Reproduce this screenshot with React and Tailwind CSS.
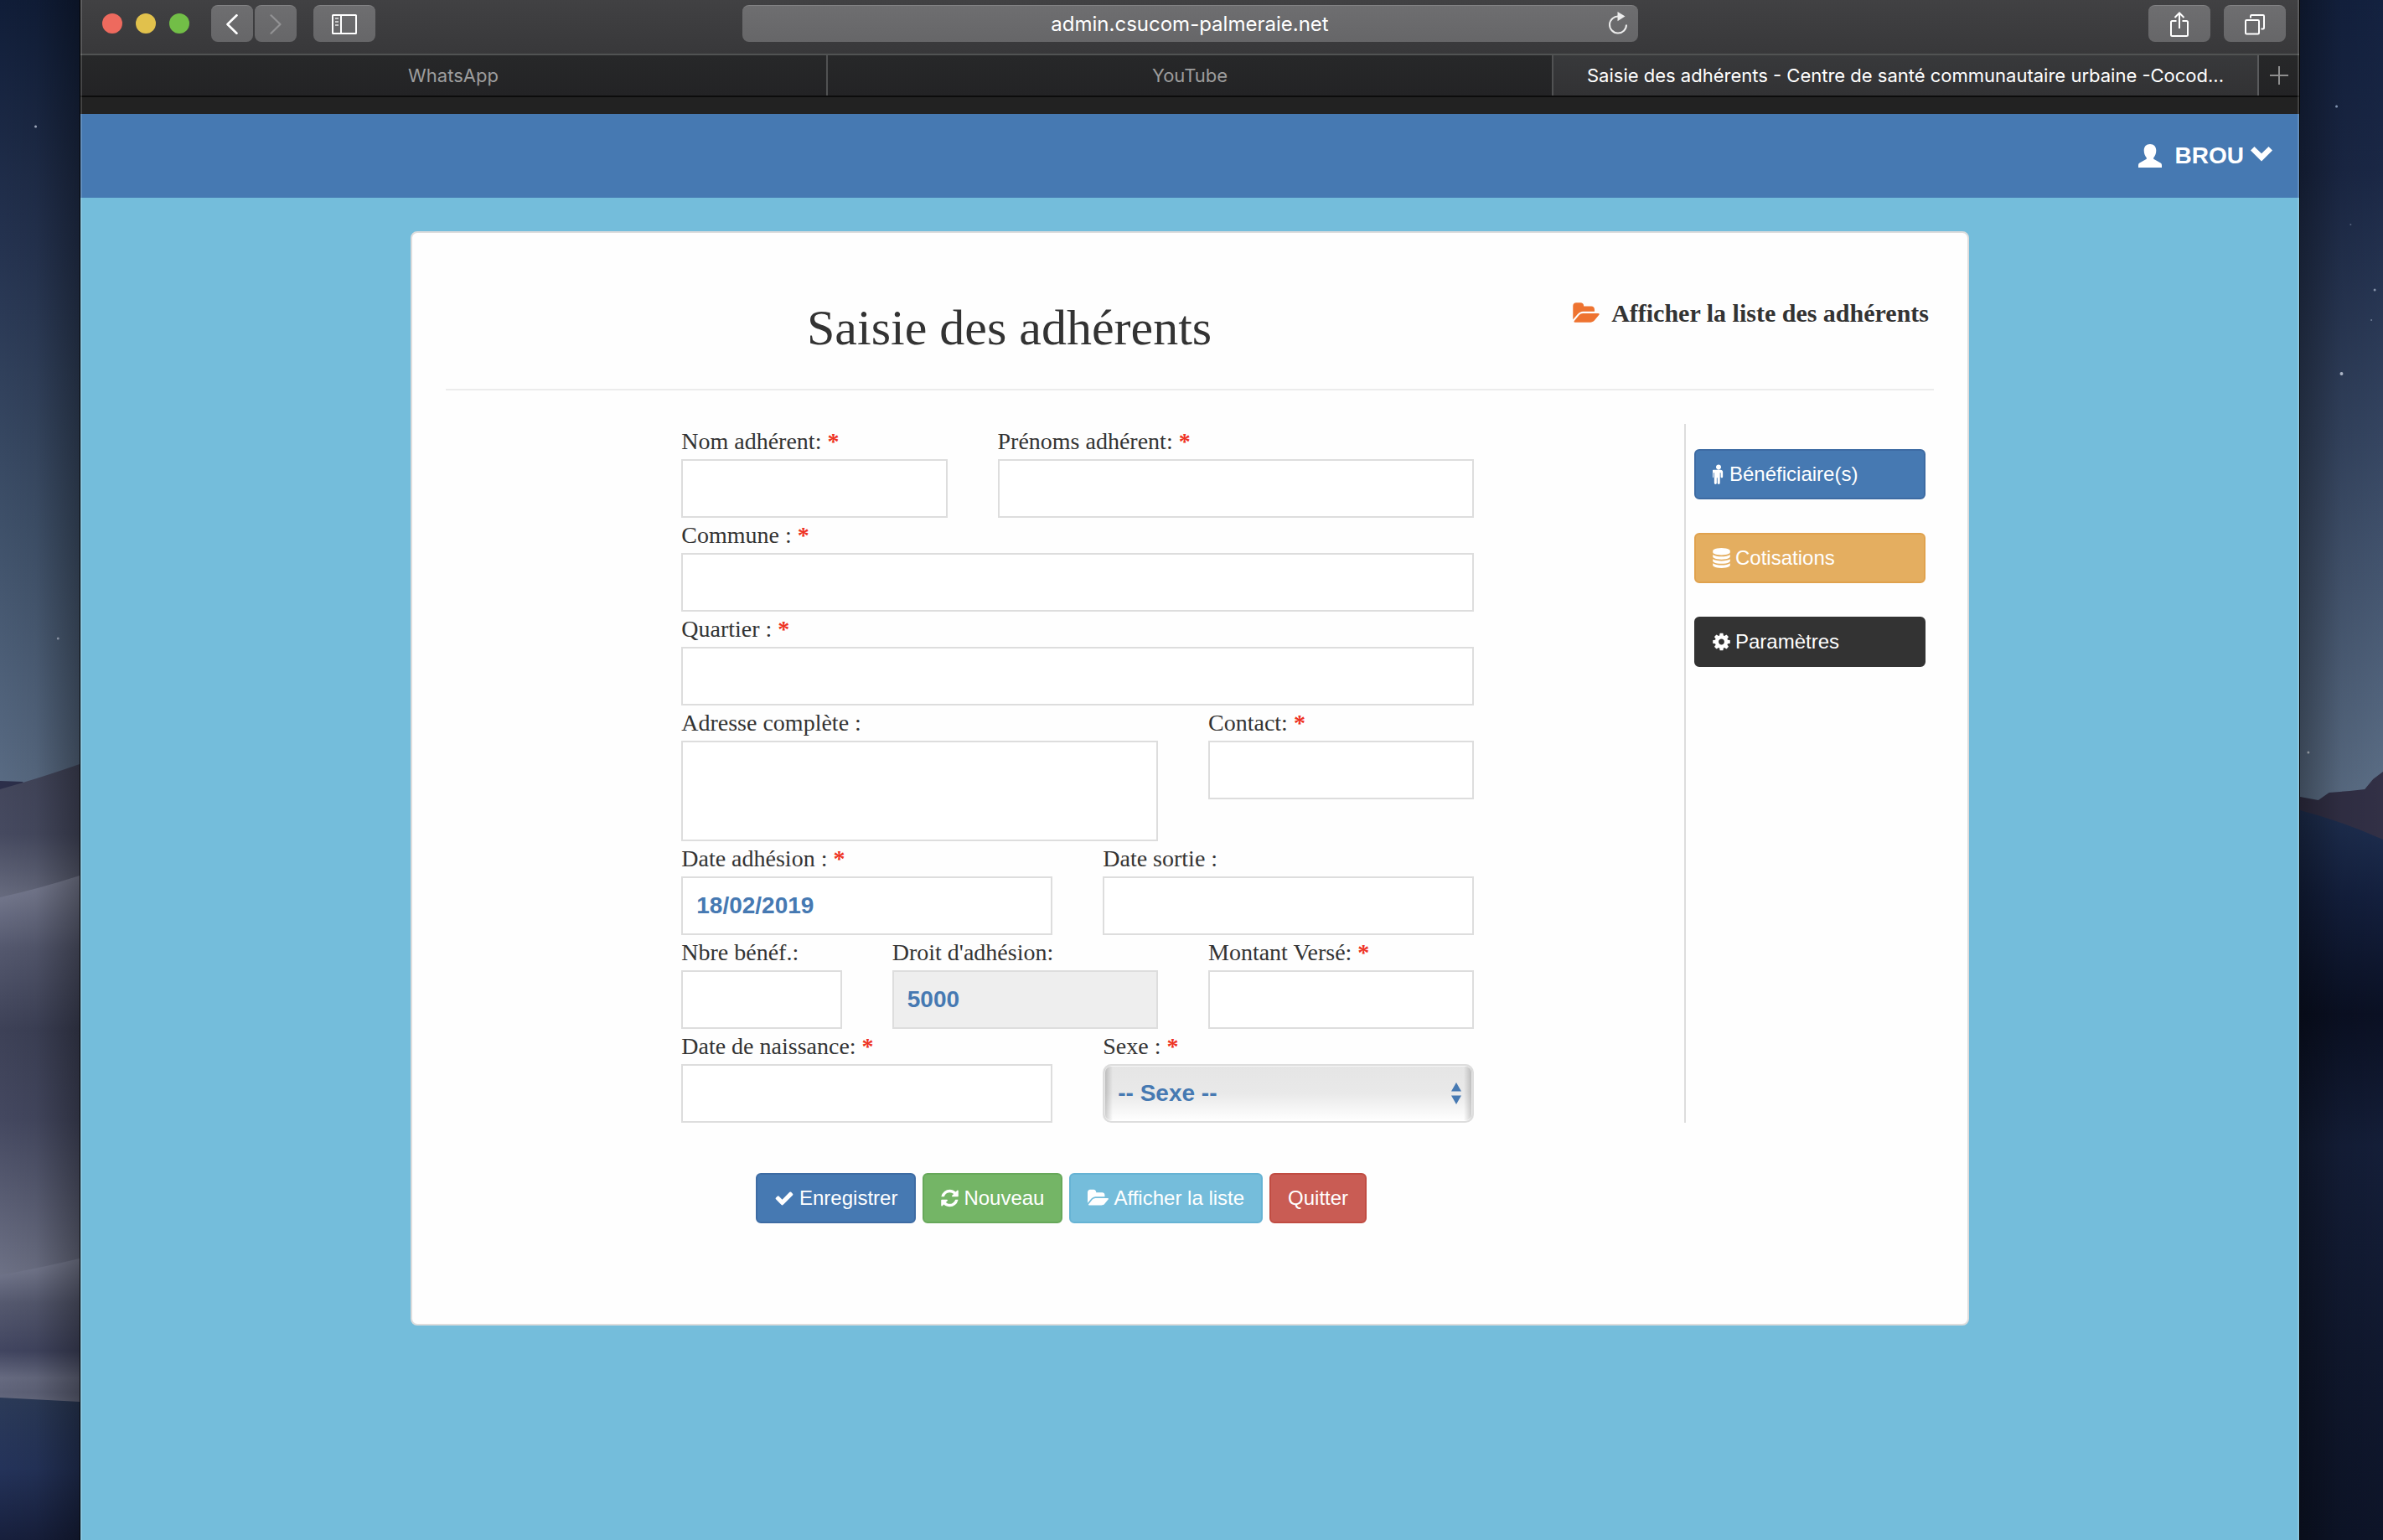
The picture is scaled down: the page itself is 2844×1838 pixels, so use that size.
import React from "react";

const SANS = "font-['Liberation_Sans',Arial,sans-serif]";
const SERIF = "font-['Liberation_Serif','Times_New_Roman',serif]";

const ICONS = {
  check: {
    box: "0 0 1792 1792",
    size: "w-6 h-6",
    d: "M1671 566q0 40-28 68l-724 724-136 136q-28 28-68 28t-68-28l-136-136-362-362q-28-28-28-68t28-68l136-136q28-28 68-28t68 28l294 295 656-657q28-28 68-28t68 28l136 136q28 28 28 68z",
  },
  refresh: {
    box: "128 0 1536 1792",
    size: "w-[21px] h-6",
    d: "M1639 1056q0 5-1 7-64 268-268 434.5t-478 166.5q-146 0-282.5-55t-243.5-157l-129 129q-19 19-45 19t-45-19-19-45v-448q0-26 19-45t45-19h448q26 0 45 19t19 45-19 45l-137 137q71 66 161 102t187 36q134 0 250-65t186-179q11-17 53-117 8-23 30-23h192q13 0 22.5 9.5t9.5 22.5zm25-800v448q0 26-19 45t-45 19h-448q-26 0-45-19t-19-45 19-45l138-138q-148-137-349-137-134 0-250 65t-186 179q-11 17-53 117-8 23-30 23h-199q-13 0-22.5-9.5t-9.5-22.5v-7q65-268 270-434.5t480-166.5q146 0 284 55.5t245 156.5l130-129q19-19 45-19t45 19 19 45z",
  },
  folder: {
    box: "64 0 1879 1792",
    size: "w-[25px] h-6",
    d: "M1943 952q0 31-31 66l-336 396q-43 51-120.5 86.5t-143.5 35.5h-1088q-34 0-60.5-13t-26.5-43q0-31 31-66l336-396q43-51 120.5-86.5t143.5-35.5h1088q34 0 60.5 13t26.5 43zm-343-344v160h-832q-94 0-197 47.5t-164 119.5l-337 396-5 6q0-4-.5-12.5t-.5-12.5v-960q0-92 66-158t158-66h320q92 0 158 66t66 158v32h544q92 0 158 66t66 158z",
  },
  database: {
    box: "128 0 1536 1792",
    size: "w-[21px] h-6",
    d: "M896 768q237 0 443-43t325-127v170q0 69-103 128t-280 93.5-385 34.5-385-34.5-280-93.5-103-128v-170q119 84 325 127t443 43zm0 768q237 0 443-43t325-127v170q0 69-103 128t-280 93.5-385 34.5-385-34.5-280-93.5-103-128v-170q119 84 325 127t443 43zm0-384q237 0 443-43t325-127v170q0 69-103 128t-280 93.5-385 34.5-385-34.5-280-93.5-103-128v-170q119 84 325 127t443 43zm0-1152q208 0 385 34.5t280 93.5 103 128v128q0 69-103 128t-280 93.5-385 34.5-385-34.5-280-93.5-103-128v-128q0-69 103-128t280-93.5 385-34.5z",
  },
  cog: {
    box: "128 0 1536 1792",
    size: "w-[21px] h-6",
    d: "M1152 896q0-106-75-181t-181-75-181 75-75 181 75 181 181 75 181-75 75-181zm512-109v222q0 12-8 23t-20 13l-185 28q-19 54-39 91 35 50 107 138 10 12 10 25t-9 23q-27 37-99 108t-94 71q-12 0-26-9l-138-108q-44 23-91 38-16 136-29 186-7 28-36 28h-222q-14 0-24.5-8.5t-11.5-21.5l-28-184q-49-16-90-37l-141 107q-10 9-25 9-14 0-25-11-126-114-165-168-7-10-7-23 0-12 8-23 15-21 51-66.5t54-70.5q-27-50-41-99l-183-27q-13-2-21-12.5t-8-23.5v-222q0-12 8-23t19-13l186-28q14-46 39-92-40-57-107-138-10-12-10-24 0-10 9-23 26-36 98.5-107.5t94.5-71.5q13 0 26 10l138 107q44-23 91-38 16-136 29-186 7-28 36-28h222q14 0 24.5 8.5t11.5 21.5l28 184q49 16 90 37l142-107q9-9 24-9 13 0 25 10 129 119 165 170 7 8 7 22 0 12-8 23-15 21-51 66.5t-54 70.5q26 50 41 98l183 28q13 2 21 12.5t8 23.5z",
  },
  male: {
    box: "384 0 1024 1792",
    size: "w-[14px] h-6",
    d: "M1280 704v416q0 40-28 68t-68 28-68-28-28-68v-352h-64v912q0 46-33 79t-79 33-79-33-33-79v-464h-64v464q0 46-33 79t-79 33-79-33-33-79v-912h-64v352q0 40-28 68t-68 28-68-28-28-68v-416q0-80 56-136t136-56h640q80 0 136 56t56 136zm-160-448q0 93-65.5 158.5t-158.5 65.5-158.5-65.5-65.5-158.5 65.5-158.5 158.5-65.5 158.5 65.5 65.5 158.5z",
  },
};

function Icon({ name, className }) {
  const icon = ICONS[name];
  return (
    <svg viewBox={icon.box} className={`shrink-0 ${className || icon.size}`} fill="currentColor" aria-hidden="true">
      <path d={icon.d} />
    </svg>
  );
}

function LeftWallpaper() {
  return (
    <svg viewBox="0 0 96 1838" preserveAspectRatio="none" className="w-24 shrink-0 border-r border-black" aria-hidden="true">
      <defs>
        <linearGradient id="l-sky" x1="0" y1="0" x2="0" y2="1">
          <stop offset="0" stopColor="#101d38" />
          <stop offset="0.3" stopColor="#24324f" />
          <stop offset="0.65" stopColor="#3e5069" />
          <stop offset="1" stopColor="#5b6d85" />
        </linearGradient>
        <linearGradient id="l-d1" x1="0" y1="0" x2="0" y2="1">
          <stop offset="0" stopColor="#42455a" />
          <stop offset="0.5" stopColor="#464a60" />
          <stop offset="1" stopColor="#6b6f82" />
        </linearGradient>
        <linearGradient id="l-d2" x1="0" y1="0" x2="0" y2="1">
          <stop offset="0" stopColor="#7d8196" />
          <stop offset="0.18" stopColor="#54586e" />
          <stop offset="0.38" stopColor="#3d4157" />
          <stop offset="0.6" stopColor="#444860" />
          <stop offset="1" stopColor="#6f7387" />
        </linearGradient>
        <linearGradient id="l-d3" x1="0" y1="0" x2="0" y2="1">
          <stop offset="0" stopColor="#7d8196" />
          <stop offset="0.3" stopColor="#55596f" />
          <stop offset="0.62" stopColor="#414560" />
          <stop offset="0.8" stopColor="#666a80" />
          <stop offset="0.9" stopColor="#5f6379" />
          <stop offset="1" stopColor="#6b6f84" />
        </linearGradient>
        <linearGradient id="l-gr" x1="0" y1="0" x2="0" y2="1">
          <stop offset="0" stopColor="#2b3a58" />
          <stop offset="0.5" stopColor="#24335a" />
          <stop offset="1" stopColor="#171f3c" />
        </linearGradient>
        <linearGradient id="l-sh" x1="0" y1="0" x2="1" y2="0">
          <stop offset="0" stopColor="#000" stopOpacity="0" />
          <stop offset="0.45" stopColor="#000" stopOpacity="0.06" />
          <stop offset="1" stopColor="#000" stopOpacity="0.34" />
        </linearGradient>
      </defs>
      <rect width="96" height="960" fill="url(#l-sky)" />
      <circle cx="43" cy="151" r="1.5" fill="#aab4c8" />
      <circle cx="70" cy="762" r="1.5" fill="#aab4c8" />
      <path d="M0 932 L27 933 L60 960 H0z" fill="#2c2f4a" />
      <path d="M0 942 Q50 928 96 912 V1080 H0z" fill="url(#l-d1)" />
      <path d="M0 1071 Q50 1060 96 1045 V1530 H0z" fill="url(#l-d2)" />
      <path d="M0 1522 Q50 1513 96 1502 V1680 H0z" fill="url(#l-d3)" />
      <path d="M0 1668 L96 1673 V1838 H0z" fill="url(#l-gr)" />
      <rect width="96" height="1838" fill="url(#l-sh)" />
    </svg>
  );
}

function RightWallpaper() {
  return (
    <svg viewBox="0 0 100 1838" preserveAspectRatio="none" className="w-[100px] shrink-0 border-l border-black" aria-hidden="true">
      <defs>
        <linearGradient id="r-sky" x1="0" y1="0" x2="0" y2="1">
          <stop offset="0" stopColor="#13213f" />
          <stop offset="0.2" stopColor="#1a2745" />
          <stop offset="0.5" stopColor="#33435f" />
          <stop offset="1" stopColor="#61748b" />
        </linearGradient>
        <linearGradient id="r-d" x1="0" y1="0" x2="0" y2="1">
          <stop offset="0" stopColor="#1f3052" />
          <stop offset="0.12" stopColor="#131f3d" />
          <stop offset="0.28" stopColor="#0a1023" />
          <stop offset="0.46" stopColor="#141e38" />
          <stop offset="0.75" stopColor="#10182e" />
          <stop offset="1" stopColor="#0d1428" />
        </linearGradient>
        <linearGradient id="r-sh" x1="0" y1="0" x2="1" y2="0">
          <stop offset="0" stopColor="#000" stopOpacity="0.34" />
          <stop offset="0.5" stopColor="#000" stopOpacity="0.07" />
          <stop offset="1" stopColor="#000" stopOpacity="0" />
        </linearGradient>
      </defs>
      <rect width="100" height="1010" fill="url(#r-sky)" />
      <circle cx="44" cy="127" r="1.5" fill="#8fa3c4" />
      <circle cx="50" cy="446" r="2" fill="#b9c3d4" />
      <circle cx="90" cy="346" r="1.5" fill="#8895ad" />
      <circle cx="86" cy="382" r="1" fill="#76849e" />
      <circle cx="61" cy="268" r="1" fill="#5d6b86" />
      <circle cx="10" cy="898" r="1.5" fill="#c4ccd6" />
      <path d="M0 951 L22 955 L35 946 L60 944 L78 942 L88 930 L100 921 V1010 H0z" fill="#323046" />
      <path d="M0 967 Q50 980 100 1002 V1838 H0z" fill="url(#r-d)" />
      <rect width="100" height="1838" fill="url(#r-sh)" />
    </svg>
  );
}

function ToolButton({ label, className, children }) {
  return (
    <button
      type="button"
      aria-label={label}
      className={`flex h-11 items-center justify-center rounded-lg border-t border-[#828284] bg-linear-to-b from-[#6e6e70] to-[#666668] text-white ${className}`}
    >
      {children}
    </button>
  );
}

function Toolbar() {
  return (
    <div className="grid h-[66px] grid-cols-[1fr_minmax(0,1069px)_1fr] items-start border-b-2 border-[#515353] bg-linear-to-b from-[#414143] to-[#38383a] pt-1.5">
      <div className="flex items-center pl-[26px]">
        <div className="flex gap-4">
          <span className="size-6 rounded-full bg-[#ee6a5e]" />
          <span className="size-6 rounded-full bg-[#e1c14c]" />
          <span className="size-6 rounded-full bg-[#72be47]" />
        </div>
        <div className="ml-[26px] flex gap-0.5">
          <ToolButton label="Page précédente" className="w-[50px]">
            <svg viewBox="0 0 14 24" className="h-6 w-3.5" fill="none" stroke="currentColor" strokeWidth="2.6" strokeLinecap="round" strokeLinejoin="round">
              <path d="M12.5 1.3 L1.5 12 L12.5 22.7" />
            </svg>
          </ToolButton>
          <ToolButton label="Page suivante" className="w-[50px]">
            <svg viewBox="0 0 14 24" className="h-6 w-3.5 text-[#929294]" fill="none" stroke="currentColor" strokeWidth="2.2" strokeLinecap="round" strokeLinejoin="round">
              <path d="M1.5 1.3 L12.5 12 L1.5 22.7" />
            </svg>
          </ToolButton>
        </div>
        <ToolButton label="Barre latérale" className="ml-5 w-[74px]">
          <svg viewBox="0 0 30 24" className="h-6 w-[30px]" fill="none" stroke="currentColor" strokeWidth="2">
            <rect x="1" y="1" width="28" height="22" rx="0.6" />
            <path d="M11 1 V23" />
            <path d="M4 5 H8 M4 9 H8 M4 13 H8" stroke="#c8c8c9" />
          </svg>
        </ToolButton>
      </div>
      <div className="relative">
        <input
          type="text"
          aria-label="Adresse"
          defaultValue="admin.csucom-palmeraie.net"
          className="h-11 w-full rounded-lg border-t border-[#828284] bg-linear-to-b from-[#6e6e70] to-[#666668] text-center font-['Inter',sans-serif] text-2xl text-white"
        />
        <button type="button" aria-label="Recharger" className="absolute top-2 right-3 text-[#ececec]">
          <svg viewBox="0 0 24 28" className="h-7 w-6" fill="none" stroke="currentColor" strokeWidth="2">
            <path d="M13 5.6 A10 10 0 1 0 22 15.5" />
            <path d="M11.5 0 L20.5 5.6 L11.5 11.2z" fill="currentColor" stroke="none" />
          </svg>
        </button>
      </div>
      <div className="flex justify-end gap-4 pr-4">
        <ToolButton label="Partager" className="w-[74px]">
          <svg viewBox="0 0 24 30" className="h-[30px] w-6" fill="none" stroke="currentColor" strokeWidth="2">
            <path d="M8.5 11 H3.5 Q2 11 2 12.5 V27.5 Q2 29 3.5 29 H20.5 Q22 29 22 27.5 V12.5 Q22 11 20.5 11 H15.5" />
            <path d="M12 20 V1.5 M6.5 7 L12 1.5 L17.5 7" />
          </svg>
        </ToolButton>
        <ToolButton label="Afficher les onglets" className="w-[74px]">
          <svg viewBox="0 0 26 26" className="size-[26px]" fill="none" stroke="currentColor" strokeWidth="2">
            <rect x="2" y="8" width="16" height="16.5" rx="1.2" />
            <path d="M8 5.5 V3.2 Q8 2 9.2 2 H22.8 Q24 2 24 3.2 V17.3 Q24 18.5 22.8 18.5 H20.5" />
          </svg>
        </ToolButton>
      </div>
    </div>
  );
}

function TabBar() {
  return (
    <div className="border-b-2 border-[#0c0c0c] font-['Inter',sans-serif] text-[22px]">
      <nav className="grid h-12 grid-cols-[892fr_866fr_842fr_48px] bg-linear-to-b from-[#272829] to-[#232325] text-[#9d9d9d]">
        <button type="button" className="truncate border-r-2 border-[#515253] px-6">WhatsApp</button>
        <button type="button" className="truncate border-r-2 border-[#515253] px-6">YouTube</button>
        <button type="button" className="truncate border-r-2 border-[#5a5b5d] bg-linear-to-b from-[#38393b] to-[#323234] px-6 text-white">
          Saisie des adhérents - Centre de santé communautaire urbaine -Cocod...
        </button>
        <button type="button" aria-label="Nouvel onglet" className="flex items-center justify-center">
          <svg viewBox="0 0 22 22" className="size-[22px]" stroke="#8e8e8e" strokeWidth="2">
            <path d="M11 0 V22 M0 11 H22" />
          </svg>
        </button>
      </nav>
    </div>
  );
}

function SiteNav() {
  return (
    <header className="flex h-[100px] items-center justify-end bg-[#4679b2] pr-8">
      <button type="button" className={`flex items-center text-[28px] font-bold text-white ${SANS}`}>
        <svg viewBox="0 0 28 28" className="mr-4 size-7" fill="currentColor" aria-hidden="true">
          <path d="M14 0C18.6 0 21.3 3 21.3 7.6C21.3 11.4 20 14.4 18.2 16.2V17.8L26.6 22.6Q28 23.5 28 25V28H0V25Q0 23.5 1.4 22.6L9.8 17.8V16.2C8 14.4 6.7 11.4 6.7 7.6C6.7 3 9.4 0 14 0z" />
        </svg>
        BROU
        <svg viewBox="0 0 26 22" className="ml-2 h-[22px] w-[26px]" fill="currentColor" aria-hidden="true">
          <path d="M0 4.6L4.5 0L13 8.2L21.5 0L26 4.6L13 17.4z" />
        </svg>
      </button>
    </header>
  );
}

const CONTROL = "block w-full border-2 border-[#dddddd] px-4 text-[28px] font-bold text-[#4679b2]";

function Field({ id, label, required, span, children }) {
  return (
    <div className={`px-[30px] ${span}`}>
      <label htmlFor={id} className={`block h-[42px] text-[28px] leading-[42px] whitespace-nowrap text-[#333333] ${SERIF}`}>
        {label}
        {required && <span className="font-bold text-[#ee3223]"> *</span>}
      </label>
      {children || <input id={id} type="text" className={`h-[70px] bg-white ${CONTROL} ${SANS}`} />}
    </div>
  );
}

function MemberForm() {
  return (
    <form id="adherent" className="ml-[17%] grid max-w-[1006px] grid-cols-8">
      <Field id="nom" label="Nom adhérent:" required span="col-span-3" />
      <Field id="prenoms" label="Prénoms adhérent:" required span="col-span-5" />
      <Field id="commune" label="Commune :" required span="col-span-8" />
      <Field id="quartier" label="Quartier :" required span="col-span-8" />
      <Field id="adresse" label="Adresse complète :" span="col-span-5">
        <textarea id="adresse" className={`h-[120px] resize-none bg-white ${CONTROL} ${SANS}`} />
      </Field>
      <Field id="contact" label="Contact:" required span="col-span-3" />
      <Field id="adhesion" label="Date adhésion :" required span="col-span-4">
        <input id="adhesion" type="text" defaultValue="18/02/2019" className={`h-[70px] bg-white ${CONTROL} ${SANS}`} />
      </Field>
      <Field id="sortie" label="Date sortie :" span="col-span-4" />
      <Field id="nbre" label="Nbre bénéf.:" span="col-span-2" />
      <Field id="droit" label="Droit d'adhésion:" span="col-span-3">
        <input id="droit" type="text" readOnly defaultValue="5000" className={`h-[70px] bg-[#eeeeee] ${CONTROL} ${SANS}`} />
      </Field>
      <Field id="montant" label="Montant Versé:" required span="col-span-3" />
      <Field id="naissance" label="Date de naissance:" required span="col-span-4" />
      <Field id="sexe" label="Sexe :" required span="col-span-4">
        <div className="relative">
          <select
            id="sexe"
            className={`h-[70px] appearance-none rounded-[10px] bg-[linear-gradient(90deg,rgba(0,0,0,0.2),transparent_10px,transparent_calc(100%-10px),rgba(0,0,0,0.2)),linear-gradient(#e5e5e5,#e9e9e9_50%,#ffffff)] shadow-[inset_0_0_0_1px_rgba(255,255,255,0.6)] ${CONTROL} ${SANS}`}
          >
            <option>-- Sexe --</option>
          </select>
          <svg viewBox="0 0 12 26" className="pointer-events-none absolute top-[22px] right-[15px] h-[26px] w-3" fill="#4679b2" aria-hidden="true">
            <path d="M6 0 L12 10.5 H0z M0 15.5 H12 L6 26z" />
          </svg>
        </div>
      </Field>
    </form>
  );
}

function ActionButton({ icon, tone, children }) {
  return (
    <button type="button" className={`flex h-[60px] items-center gap-1.5 rounded-md border-2 px-5 text-2xl text-white ${SANS} ${tone}`}>
      {icon && <Icon name={icon} />}
      {children}
    </button>
  );
}

function Card() {
  return (
    <main className={`mx-auto mt-10 w-full max-w-[1860px] rounded-lg border-2 border-[#dddddd] bg-[#fefefe] px-10 pb-[120px] ${SERIF}`}>
      <div className="flex items-start border-b-2 border-[#ececec] pt-19 pb-10 text-[#333333]">
        <h1 className="mt-1 flex-1 text-center text-[60px] leading-[66px]">Saisie des adhérents</h1>
        <a href="#liste" className="flex items-center gap-3.5 pr-1.5 text-[30px] leading-10 font-bold">
          <Icon name="folder" className="h-[30px] w-8 text-[#ee7330]" />
          Afficher la liste des adhérents
        </a>
      </div>
      <div className="mt-10 flex">
        <div className="flex-1">
          <MemberForm />
        </div>
        <aside className="flex w-[298px] flex-col gap-10 border-l-2 border-[#dddddd] px-2.5 pt-[30px]">
          <ActionButton icon="male" tone="border-[#3d6ba3] bg-[#4679b2]">Bénéficiaire(s)</ActionButton>
          <ActionButton icon="database" tone="border-[#e0a24e] bg-[#e4ae60]">Cotisations</ActionButton>
          <ActionButton icon="cog" tone="border-[#333333] bg-[#333333]">Paramètres</ActionButton>
        </aside>
      </div>
      <div className="mt-[60px] flex gap-2 pl-[370px]">
        <ActionButton icon="check" tone="border-[#3d6ba3] bg-[#4679b2]">Enregistrer</ActionButton>
        <ActionButton icon="refresh" tone="border-[#67a85a] bg-[#74b566]">Nouveau</ActionButton>
        <ActionButton icon="folder" tone="border-[#66b3d4] bg-[#75bddb]">Afficher la liste</ActionButton>
        <ActionButton tone="border-[#c04c42] bg-[#c95c54]">Quitter</ActionButton>
      </div>
    </main>
  );
}

export default function App() {
  return (
    <div className="flex min-h-screen items-stretch bg-[#10182e]">
      <LeftWallpaper />
      <div className="relative flex min-w-0 flex-1 flex-col">
        <Toolbar />
        <TabBar />
        <div className="h-5 bg-[#222222]" />
        <SiteNav />
        <div className="flex-1 bg-[#74bddb] pb-10">
          <Card />
        </div>
        <div className="pointer-events-none absolute inset-0 border-x-2 border-white/15" />
      </div>
      <RightWallpaper />
    </div>
  );
}
